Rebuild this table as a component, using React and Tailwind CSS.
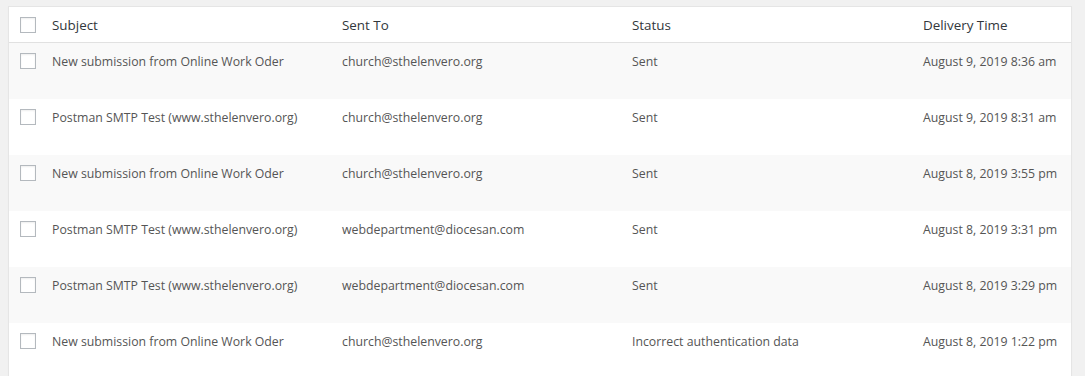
const rows = [
  { subject: "New submission from Online Work Oder", to: "church@sthelenvero.org", status: "Sent", time: "August 9, 2019 8:36 am" },
  { subject: "Postman SMTP Test (www.sthelenvero.org)", to: "church@sthelenvero.org", status: "Sent", time: "August 9, 2019 8:31 am" },
  { subject: "New submission from Online Work Oder", to: "church@sthelenvero.org", status: "Sent", time: "August 8, 2019 3:55 pm" },
  { subject: "Postman SMTP Test (www.sthelenvero.org)", to: "webdepartment@diocesan.com", status: "Sent", time: "August 8, 2019 3:31 pm" },
  { subject: "Postman SMTP Test (www.sthelenvero.org)", to: "webdepartment@diocesan.com", status: "Sent", time: "August 8, 2019 3:29 pm" },
  { subject: "New submission from Online Work Oder", to: "church@sthelenvero.org", status: "Incorrect authentication data", time: "August 8, 2019 1:22 pm" },
];

const Check = () => (
  <span className="block w-4 h-4 border border-[#b4b9be] bg-white shadow-[inset_0_1px_2px_rgba(0,0,0,0.07)]" />
);

const cols = "grid grid-cols-[33px_290px_290px_291px_1fr]";

export default function App() {
  return (
    <div className="min-h-[376px] bg-[#f1f1f1] pt-[6px] pl-[8px] pr-[13px] font-['Open_Sans','Noto_Sans',sans-serif]">
      <div className="bg-white border border-[#e5e5e5] shadow-[0_1px_1px_rgba(0,0,0,0.04)]">
        {/* head */}
        <div className={`${cols} h-[36px] border-b border-[#e1e1e1] text-[13.4px] text-[#32373c]`}>
          <div className="pl-[11px] pt-[10px]">
            <Check />
          </div>
          <div className="pl-[10px] pt-[8px] leading-[20px]">Subject</div>
          <div className="pl-[10px] pt-[8px] leading-[20px]">Sent To</div>
          <div className="pl-[10px] pt-[8px] leading-[20px]">Status</div>
          <div className="pl-[10px] pt-[8px] leading-[20px]">Delivery Time</div>
        </div>
        {/* rows */}
        {rows.map((row, idx) => (
          <div
            key={idx}
            className={`${cols} h-[56px] text-[12.3px] text-[#555] ${idx % 2 === 0 ? "bg-[#f9f9f9]" : "bg-white"}`}
          >
            <div className="pl-[11px] pt-[10px]">
              <Check />
            </div>
            <div className="pl-[10px] pt-[9px] leading-[19px]">{row.subject}</div>
            <div className="pl-[10px] pt-[9px] leading-[19px]">{row.to}</div>
            <div className="pl-[10px] pt-[9px] leading-[19px]">{row.status}</div>
            <div className="pl-[10px] pt-[9px] leading-[19px] whitespace-nowrap">{row.time}</div>
          </div>
        ))}
      </div>
    </div>
  );
}
